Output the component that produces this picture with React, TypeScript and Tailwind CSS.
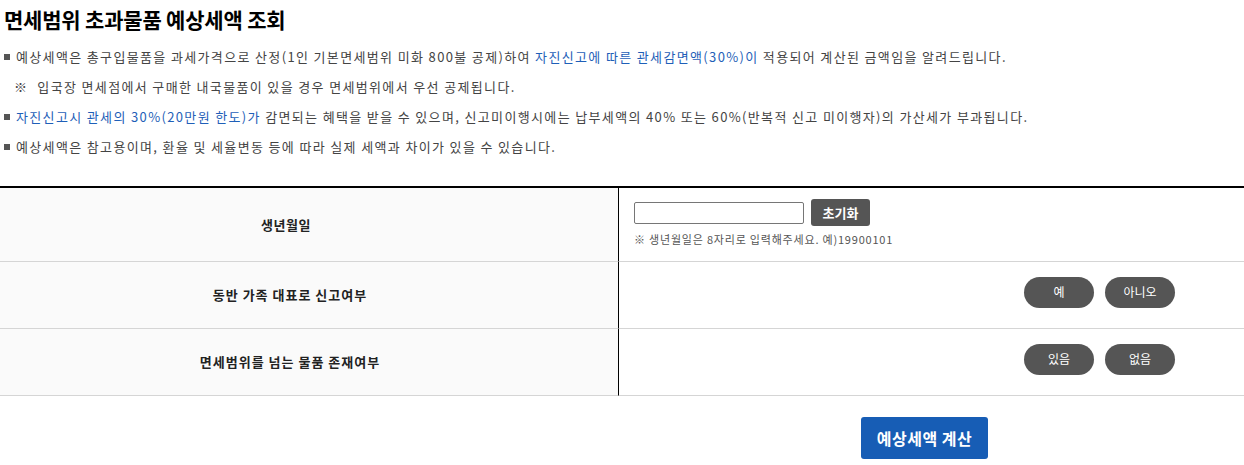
import { useState } from "react";

const font = { fontFamily: '"Noto Sans CJK KR", "Noto Sans", sans-serif' };

function Bullet({ children }: { children: React.ReactNode }) {
    return (
        <li className="flex items-center h-[30px]">
            <span className="w-[6px] h-[6px] bg-[#555] ml-[4px] mr-[6px] shrink-0" />
            <span>{children}</span>
        </li>
    );
}

function PillPair({ labels }: { labels: [string, string] }) {
    return (
        <div className="flex justify-end gap-[11px] pr-[69px] pb-[6px]">
            {labels.map((l) => (
                <button
                    key={l}
                    className="w-[70px] h-[31px] rounded-full bg-[#555] text-white text-[12px] leading-none"
                >
                    {l}
                </button>
            ))}
        </div>
    );
}

export default function App() {
    const [birth, setBirth] = useState("");

    return (
        <div className="w-[1244px] bg-white text-[#444]" style={font}>
            {/* Title */}
            <h1 className="h-[42px] pl-[4px] pt-[4px] text-[21px] font-bold text-black leading-[30px] tracking-[-0.2px]">
                면세범위 초과물품 예상세액 조회
            </h1>

            {/* Notes */}
            <ul className="text-[13px] leading-[30px] tracking-[1.35px]">
                <Bullet>
                    예상세액은 총구입물품을 과세가격으로 산정(1인 기본면세범위 미화 800불 공제)하여{" "}
                    <span className="text-[#1f5fb8]">자진신고에 따른 관세감면액(30%)이</span> 적용되어 계산된 금액임을 알려드립니다.
                </Bullet>
                <li className="h-[30px] pl-[14px]">
                    <span className="mr-[9px]">※</span>입국장 면세점에서 구매한 내국물품이 있을 경우 면세범위에서 우선 공제됩니다.
                </li>
                <Bullet>
                    <span className="text-[#1f5fb8]">자진신고시 관세의 30%(20만원 한도)가</span> 감면되는 혜택을 받을 수 있으며, 신고미이행시에는 납부세액의 40% 또는 60%(반복적 신고 미이행자)의 가산세가 부과됩니다.
                </Bullet>
                <Bullet>예상세액은 참고용이며, 환율 및 세율변동 등에 따라 실제 세액과 차이가 있을 수 있습니다.</Bullet>
            </ul>

            {/* Form table */}
            <div className="mt-[24px] border-t-2 border-black grid grid-cols-[619px_1fr] text-[13px]">
                <div className="h-[74px] bg-[#fafafa] border-r border-black border-b border-b-[#d5d5d5] flex items-center justify-center pr-[46px] font-bold text-[#222] tracking-[0.6px]">
                    생년월일
                </div>
                <div className="h-[74px] border-b border-[#d5d5d5] pl-[15px] pt-[11px]">
                    <div className="flex items-center gap-[7px]">
                        <input
                            value={birth}
                            onChange={(e) => setBirth(e.target.value)}
                            className="w-[170px] h-[22px] border border-[#767676] rounded-[2px] px-1 text-[13px] outline-none"
                        />
                        <button className="w-[59px] h-[27px] rounded-[3px] bg-[#555] text-white font-bold text-[13px] leading-none">
                            초기화
                        </button>
                    </div>
                    <p className="mt-[5px] text-[11px] leading-[16px] text-[#555] tracking-[0.8px]">
                        ※ 생년월일은 8자리로 입력해주세요. 예)19900101
                    </p>
                </div>

                <div className="h-[67px] bg-[#fafafa] border-r border-black border-b border-b-[#d5d5d5] flex items-center justify-center pr-[38px] font-bold text-[#222] tracking-[1px]">
                    동반 가족 대표로 신고여부
                </div>
                <div className="h-[67px] border-b border-[#d5d5d5] flex items-center justify-end">
                    <PillPair labels={["예", "아니오"]} />
                </div>

                <div className="h-[67px] bg-[#fafafa] border-r border-black border-b border-b-[#d5d5d5] flex items-center justify-center pr-[38px] font-bold text-[#222] tracking-[1px]">
                    면세범위를 넘는 물품 존재여부
                </div>
                <div className="h-[67px] border-b border-[#d5d5d5] flex items-center justify-end">
                    <PillPair labels={["있음", "없음"]} />
                </div>
            </div>

            {/* Submit */}
            <div className="pt-[21px] pl-[861px]">
                <button className="w-[127px] h-[42px] rounded-[3px] bg-[#175db5] text-white text-[16px] font-bold leading-none tracking-[0.5px]">
                    예상세액 계산
                </button>
            </div>
        </div>
    );
}
